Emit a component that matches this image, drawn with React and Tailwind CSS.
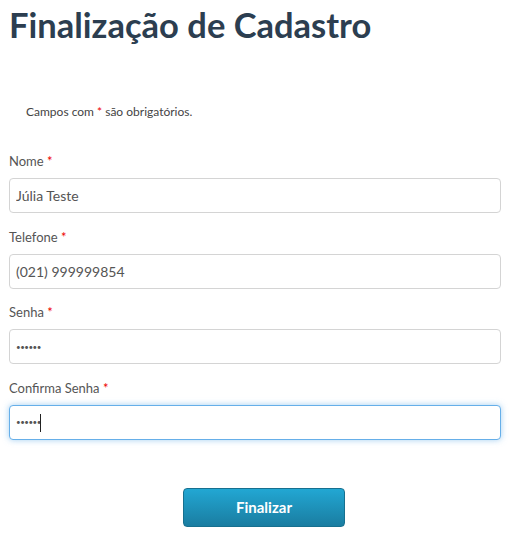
import React from "react";

function Field({ label, children }) {
  return (
    <div className="mt-[13.6px] first:mt-0">
      <label className="block h-5 text-[13px] leading-5 text-[#555]">
        {label} <span className="text-[#e00]">*</span>
      </label>
      <div className="mt-[7px]">{children}</div>
    </div>
  );
}

const baseCls =
  "block w-full h-[35px] px-[6px] rounded-[4px] border bg-white text-[#555] outline-none";
const textCls = `${baseCls} border-[#d4d4d4] text-[14px]`;
const passCls = `${baseCls} text-[8px] tracking-[-0.5px]`;

export default function App() {
  return (
    <div className="min-h-screen bg-white px-[9px] font-['Lato',sans-serif]">
      <h1 className="pt-[3px] text-[34.5px] font-bold leading-[44px] text-[#2c3e50]">
        Finalização de Cadastro
      </h1>

      <p className="mt-[55px] pl-[17px] text-[12px] leading-5 text-[#444]">
        Campos com <span className="text-[#e00]">*</span> são obrigatórios.
      </p>

      <form className="mt-[29px]" onSubmit={(e) => e.preventDefault()}>
        <Field label="Nome">
          <input className={textCls} defaultValue="Júlia Teste" />
        </Field>
        <Field label="Telefone">
          <input className={textCls} defaultValue="(021) 999999854" />
        </Field>
        <Field label="Senha">
          <input type="password" className={`${passCls} border-[#d4d4d4]`} defaultValue="123456" />
        </Field>
        <Field label="Confirma Senha">
          <div className="relative">
            <input
              type="password"
              className={`${passCls} border-[#66afe9] shadow-[0_0_6px_rgba(102,175,233,0.6)]`}
              defaultValue="123456"
            />
            <span className="absolute left-[31px] top-[9px] h-[18px] w-px bg-[#222]" />
          </div>
        </Field>

        <div className="mt-[48px] flex justify-center pl-[18px]">
          <button
            type="submit"
            className="h-[39px] w-[162px] rounded-[4px] border border-[#17708f] bg-gradient-to-b from-[#22a7d3] to-[#1a7da1] text-[15px] font-bold text-white"
          >
            Finalizar
          </button>
        </div>
      </form>
    </div>
  );
}
